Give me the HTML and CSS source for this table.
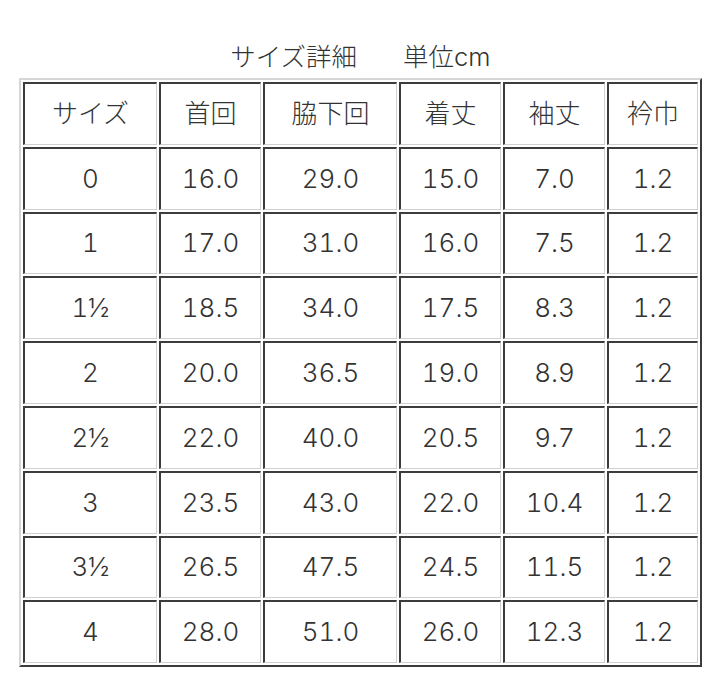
FILE: index.html
```html
<!DOCTYPE html>
<html lang="ja">
<head>
<meta charset="utf-8">
<title>サイズ詳細</title>
<link rel="stylesheet" href="styles.css">
</head>
<body>
<div class="page">
<table class="size-table">
<caption class="size-caption"><span>サイズ詳細</span><span class="unit">単位cm</span></caption>
<colgroup>
<col class="c1"><col class="c2"><col class="c3"><col class="c4"><col class="c5"><col class="c6">
</colgroup>
<tr><td>サイズ</td><td>首回</td><td>脇下回</td><td>着丈</td><td>袖丈</td><td>衿巾</td></tr>
<tr><td>0</td><td>16.0</td><td>29.0</td><td>15.0</td><td>7.0</td><td>1.2</td></tr>
<tr><td>1</td><td>17.0</td><td>31.0</td><td>16.0</td><td>7.5</td><td>1.2</td></tr>
<tr><td>1½</td><td>18.5</td><td>34.0</td><td>17.5</td><td>8.3</td><td>1.2</td></tr>
<tr><td>2</td><td>20.0</td><td>36.5</td><td>19.0</td><td>8.9</td><td>1.2</td></tr>
<tr><td>2½</td><td>22.0</td><td>40.0</td><td>20.5</td><td>9.7</td><td>1.2</td></tr>
<tr><td>3</td><td>23.5</td><td>43.0</td><td>22.0</td><td>10.4</td><td>1.2</td></tr>
<tr><td>3½</td><td>26.5</td><td>47.5</td><td>24.5</td><td>11.5</td><td>1.2</td></tr>
<tr><td>4</td><td>28.0</td><td>51.0</td><td>26.0</td><td>12.3</td><td>1.2</td></tr>
</table>
</div>
</body>
</html>
```
FILE: styles.css
```css
html, body {
  margin: 0;
  padding: 0;
  background: #ffffff;
}
.page {
  padding: 42px 0 0 19px;
  font-family: Inter, "Noto Sans CJK JP", "Noto Sans", sans-serif;
  font-weight: 300;
  font-variant-numeric: tabular-nums;
  color: #333333;
}
.size-table {
  border-collapse: separate;
  border-spacing: 2px;
  border-style: solid;
  border-width: 2px;
  border-color: #d6d6d6 #3c3c3c #3c3c3c #d6d6d6;
  table-layout: fixed;
  width: 683px;
}
.size-caption {
  font-size: 25.5px;
  font-weight: 300;
  line-height: 30px;
  padding-bottom: 6px;
  text-align: center;
  color: #333333;
}
.size-caption .unit {
  margin-left: 46px;
}
.c1 { width: 134px; }
.c2 { width: 102px; }
.c3 { width: 134px; }
.c4 { width: 102px; }
.c5 { width: 102px; }
.c6 { width: 91px; }
.size-table td {
  box-sizing: border-box;
  height: 62.8px;
  padding: 0;
  text-align: center;
  vertical-align: middle;
  font-size: 26px;
  line-height: 30px;
  border-style: solid;
  border-width: 2px 1px 1px 2px;
  border-color: #3c3c3c #d0d0d0 #d0d0d0 #3c3c3c;
}
```
